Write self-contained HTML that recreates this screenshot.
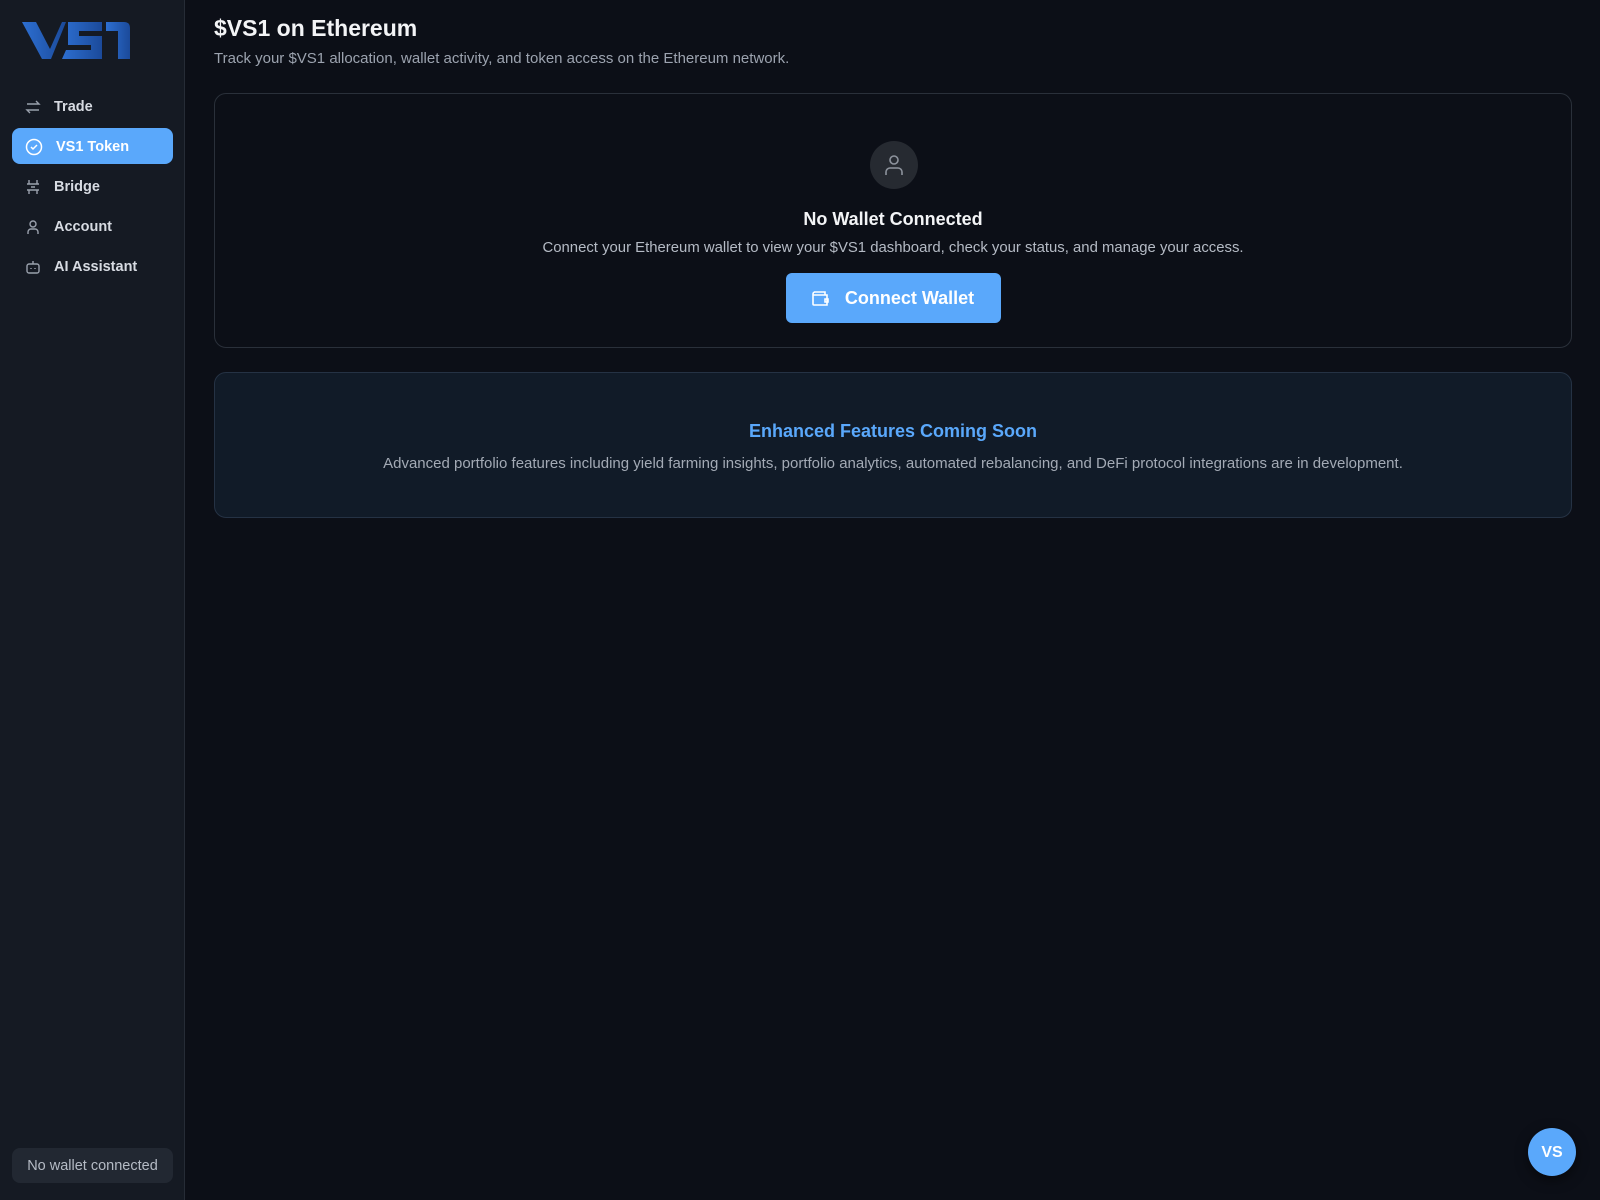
<!DOCTYPE html>
<html><head><meta charset="utf-8"><style>
*{box-sizing:border-box;margin:0;padding:0}
body{width:1600px;height:1200px;background:#0c0f17;font-family:"Liberation Sans",sans-serif;color:#e5e7eb;position:relative;overflow:hidden}
.sb{position:absolute;left:0;top:0;width:185px;height:1200px;background:#151a23;border-right:1px solid #262c36}
.nav{position:absolute;left:12px;width:161px;height:36px;border-radius:8px;display:flex;align-items:center;font-size:14.5px;font-weight:bold;color:#d7dbe2;padding-top:2px}
.nav svg{margin-left:13px;margin-right:13px}
.nav.act{background:#5aa8fb;color:#fff}
.card{position:absolute;left:214px;width:1358px;border:1px solid #2a303a;border-radius:12px;text-align:center}
</style></head><body>
<div class="sb">
<svg style="position:absolute;left:22px;top:22px" width="108" height="37" viewBox="0 0 108 37">
<defs><linearGradient id="g" x1="0" x2="1"><stop offset="0" stop-color="#2d6fd1"/><stop offset="1" stop-color="#1b4a9a"/></linearGradient></defs>
<path d="M0 0h14l14 27L40 0h4L29 37h-9z" fill="url(#g)"/>
<path d="M46 0h34v9H57v5h23v23H40l4-9h25v-5H46z" fill="url(#g)"/>
<path d="M84 0h18q6 0 6 6v31H96V9H84z" fill="url(#g)"/>
</svg>
<div class="nav" style="top:88px"><svg width="16" height="16" viewBox="0 0 16 16" fill="none" stroke="#9aa1ad" stroke-width="1.4"><path d="M2 5h12l-3-3M14 11H2l3 3"/></svg>Trade</div>
<div class="nav act" style="top:128px"><svg width="18" height="18" viewBox="0 0 18 18" fill="none" stroke="#fff" stroke-width="1.5"><circle cx="9" cy="9" r="7.5"/><path d="M6 9l2 2 4-4"/></svg>VS1 Token</div>
<div class="nav" style="top:168px"><svg width="16" height="16" viewBox="0 0 16 16" fill="none" stroke="#9aa1ad" stroke-width="1.4"><path d="M4 1v4M12 1v4M2 5h12M2 11h12M4 11v4M12 11v4M6 8h4"/></svg>Bridge</div>
<div class="nav" style="top:208px"><svg width="16" height="16" viewBox="0 0 16 16" fill="none" stroke="#9aa1ad" stroke-width="1.4"><circle cx="8" cy="5" r="3"/><path d="M3 15v-2a3 3 0 013-3h4a3 3 0 013 3v2"/></svg>Account</div>
<div class="nav" style="top:248px"><svg width="16" height="16" viewBox="0 0 16 16" fill="none" stroke="#9aa1ad" stroke-width="1.4"><rect x="2" y="5" width="12" height="9" rx="2"/><path d="M8 5V2M6 9v1M10 9v1"/></svg>AI Assistant</div>
<div style="position:absolute;left:12px;top:1148px;width:161px;height:35px;background:#222832;border-radius:8px;color:#b5bbc5;font-size:14.5px;line-height:37px;text-align:center">No wallet connected</div>
</div>
<div style="position:absolute;left:214px;top:15px;font-size:23px;font-weight:bold;color:#f3f4f6">$VS1 on Ethereum</div>
<div style="position:absolute;left:214px;top:50px;font-size:15px;color:#9ca3af">Track your $VS1 allocation, wallet activity, and token access on the Ethereum network.</div>
<div class="card" style="top:93px;height:255px">
<div style="position:absolute;left:655px;top:47px;width:48px;height:48px;border-radius:50%;background:#262a31"><svg style="position:absolute;left:14px;top:13px" width="20" height="22" viewBox="0 0 20 22" fill="none" stroke="#8d939d" stroke-width="1.6"><circle cx="10" cy="6" r="4"/><path d="M2 21v-3a4 4 0 014-4h8a4 4 0 014 4v3"/></svg></div>
<div style="position:absolute;left:0;right:0;top:115px;font-size:18px;font-weight:bold;color:#f3f4f6">No Wallet Connected</div>
<div style="position:absolute;left:0;right:0;top:146px;font-size:14.9px;color:#b5bbc5">Connect your Ethereum wallet to view your $VS1 dashboard, check your status, and manage your access.</div>
<div style="position:absolute;left:571px;top:179px;width:215px;height:50px;background:#5aa8fb;border-radius:6px;color:#fff;font-weight:bold;font-size:18px;line-height:51px;padding-left:32px">
<svg style="position:absolute;left:25px;top:16px" width="18" height="18" viewBox="0 0 18 18" fill="none" stroke="#fff" stroke-width="1.6"><path d="M3 3h11v3M2 5v10a1 1 0 001 1h13V6H3a1 1 0 01-1-1 2 2 0 012-2"/><path d="M14 10h3v3h-3z"/></svg>Connect Wallet</div>
</div>
<div class="card" style="top:372px;height:146px;background:#111b28;border-color:#253244">
<div style="position:absolute;left:0;right:0;top:48px;font-size:18px;font-weight:bold;color:#5aa8fb">Enhanced Features Coming Soon</div>
<div style="position:absolute;left:0;right:0;top:82px;font-size:15px;color:#a3aab5">Advanced portfolio features including yield farming insights, portfolio analytics, automated rebalancing, and DeFi protocol integrations are in development.</div>
</div>
<div style="position:absolute;left:1528px;top:1128px;width:48px;height:48px;border-radius:50%;background:#5aa8fb;color:#fff;font-weight:bold;font-size:16px;line-height:50px;text-align:center;box-shadow:0 4px 12px rgba(0,0,0,.5)">VS</div>
</body></html>
